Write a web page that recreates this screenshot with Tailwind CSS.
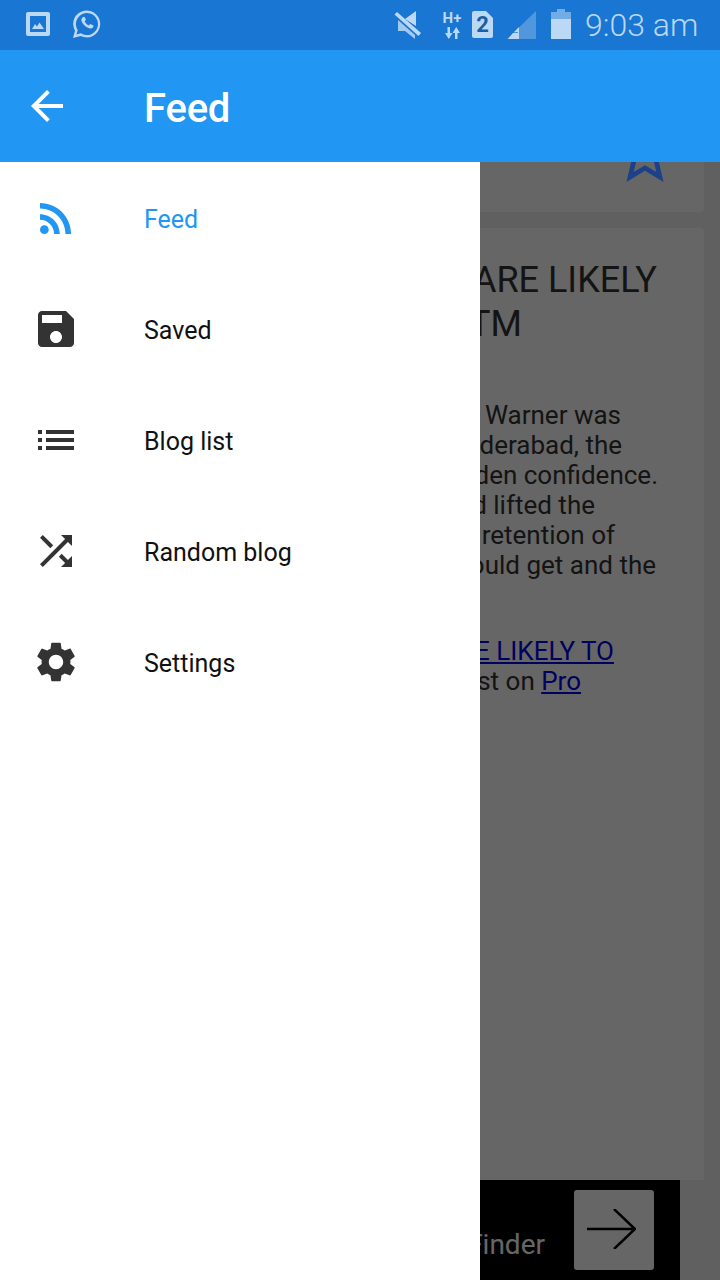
<!DOCTYPE html>
<html lang="en">
  <head>
    <meta charset="UTF-8" />
    <meta name="viewport" content="width=device-width, initial-scale=1.0" />
    <title>Feed</title>
    <script src="https://cdn.jsdelivr.net/npm/@tailwindcss/browser@4"></script>
  </head>
  <body class="font-['Roboto',sans-serif]">
    <div class="w-[720px] h-[1280px] overflow-hidden flex flex-col bg-white">
      <!-- status bar -->
      <div class="relative z-20 h-[50px] shrink-0 bg-[#1976d2] flex items-center text-[#bbd8f5]">
        <svg class="ml-[26px] -mt-[2px] w-[24px] h-[24px]" viewBox="0 0 24 24" fill="currentColor">
          <path fill-rule="evenodd" d="M2 0h20a2 2 0 0 1 2 2v20a2 2 0 0 1-2 2H2a2 2 0 0 1-2-2V2a2 2 0 0 1 2-2zm2 4v16h16V4H4zm2 13l3-5 2 2.500 2.500-4 4.500 6.500H6z" />
        </svg>
        <svg class="ml-[22px] -mt-[3px] w-[29px] h-[30px]" viewBox="0 0 29 30" fill="currentColor">
          <path fill-rule="evenodd" d="M1 29l2-7.300A13.500 13.500 0 1 1 8.600 27L1 29zm3.500-3.500l4.500-1.200A11 11 0 1 0 5.700 21l-1.200 4.500z" />
          <path d="M10.800 8.200c.8-.8 1.600-.7 2 .1l.9 2c.2.5.1.9-.3 1.300l-.7.800c.9 1.800 2.200 3.100 4 4l.9-.9c.4-.4.800-.4 1.300-.2l2 1c.7.400.8 1 .3 1.800-1 1.500-2.700 1.900-4.800 1-3.300-1.400-5.500-3.700-6.700-6.500-.7-1.800-.2-3.300 1.100-4.400z" />
        </svg>

        <svg class="ml-[293px] w-[27px] h-[28px]" viewBox="0 0 27 28" fill="currentColor">
          <path d="M22 0v15L11 8l11-8z" />
          <path d="M0.500 3.500L3 1l24 21-2.500 3z" />
          <path opacity="0.85" d="M4 9l17 15v4l-10-8H4V9z" />
        </svg>
        <div class="ml-[21px] w-[20px] h-[27px] flex flex-col items-center justify-between">
          <span class="text-[15px] leading-[12px] font-bold">H+</span>
          <svg class="w-[15px] h-[12px]" viewBox="0 0 15 12" fill="currentColor">
            <path d="M2.500 0h2.500v6h2.500l-3.750 6L0 6h2.500V0zM10 12h2.500V6H15L11.250 0 7.500 6H10v6z" />
          </svg>
        </div>
        <div class="ml-[10px] -mt-[2px] w-[21px] h-[27px] relative">
          <svg class="w-[21px] h-[27px]" viewBox="0 0 21 27" fill="currentColor">
            <path d="M2 0h12l7 7v18a2 2 0 0 1-2 2H2a2 2 0 0 1-2-2V2a2 2 0 0 1 2-2z" />
          </svg>
          <span class="absolute inset-0 flex items-center justify-center text-[22px] font-bold text-[#1a5ea8]">2</span>
        </div>
        <svg class="ml-[14px] w-[29px] h-[28px]" viewBox="0 0 29 28" fill="currentColor">
          <path opacity="0.35" d="M29 0v28H0L29 0z" />
          <path d="M6 22h5v6H1zM7 21l5-5v12h-1v-7z" />
        </svg>
        <svg class="ml-[15px] -mt-[3px] w-[20px] h-[30px]" viewBox="0 0 20 30" fill="currentColor">
          <path opacity="0.55" d="M6 0h8v3h6v7H0V3h6V0z" />
          <path d="M0 10h20v20H0z" />
        </svg>
        <span class="ml-[14px] text-[32px] leading-none font-light whitespace-nowrap">9:03 am</span>
      </div>

      <!-- toolbar -->
      <div class="relative z-20 h-[112px] shrink-0 bg-[#2196f3] flex items-center text-white">
        <svg class="ml-[23px] w-[48px] h-[48px]" viewBox="0 0 24 24" fill="currentColor">
          <path d="M20 11H7.830l5.590-5.590L12 4l-8 8 8 8 1.410-1.410L7.830 13H20v-2z" />
        </svg>
        <h1 class="ml-[73px] mt-[6px] text-[40px] leading-none font-medium tracking-[-0.2px]">Feed</h1>
      </div>

      <div class="relative flex-1 min-h-0">
        <!-- article list behind the drawer -->
        <div class="h-full bg-[#f0f0f0] flex flex-col">
          <div class="mx-[16px] h-[50px] shrink-0 bg-white rounded-b-sm flex justify-end">
            <svg class="relative z-10 -mt-[43px] mr-[23px] w-[72px] h-[72px] shrink-0 text-[#1d4189]" viewBox="0 0 24 24" fill="currentColor">
              <path d="M22 9.240l-7.190-.620L12 2 9.190 8.630 2 9.240l5.460 4.730L5.820 21 12 17.270 18.180 21l-1.630-7.030L22 9.240zM12 15.400l-3.760 2.270 1-4.280-3.320-2.880 4.380-.380L12 6.100l1.710 4.020 4.380.380-3.320 2.880 1 4.280L12 15.400z" />
            </svg>
          </div>
          <div class="mx-[16px] mt-[16px] h-[952px] shrink-0 bg-white rounded-t-sm pt-[30px] text-right whitespace-nowrap text-[#333333]">
            <p class="text-[36px] leading-[44px]">
              <span class="block pr-[47px]">ARE LIKELY</span>
              <span class="block pr-[182px]">TM</span>
            </p>
            <p class="mt-[54px] text-[26px] leading-[30px]">
              <span class="block pr-[83px]">Warner was</span>
              <span class="block pr-[82px]">Hyderabad, the</span>
              <span class="block pr-[46px]">sudden confidence.</span>
              <span class="block pr-[109px]">and lifted the</span>
              <span class="block pr-[89px]">retention of</span>
              <span class="block pr-[48px]">could get and the</span>
            </p>
            <p class="mt-[56px] text-[26px] leading-[30px]">
              <a class="block pr-[90px] text-[#0000ee] underline" href="#">ARE LIKELY TO</a>
              <span class="block pr-[123px]">first on <a class="text-[#0000ee] underline" href="#">Pro</a></span>
            </p>
          </div>
          <div class="ml-[40px] w-[640px] flex-1 bg-black flex items-center justify-end pr-[26px]">
            <span class="mt-[30px] text-[28px] leading-none text-white">Finder</span>
            <div class="ml-[29px] w-[80px] h-[80px] bg-white rounded-[3px] flex items-center justify-center pr-[5px] pb-[2px]">
              <svg class="w-[49px] h-[40px]" viewBox="0 0 49 40" fill="none" stroke="#000" stroke-width="2.500">
                <path d="M0 20h48M27 0l21 20-21 20" />
              </svg>
            </div>
          </div>
        </div>

        <!-- scrim and navigation drawer -->
        <div class="absolute inset-0 bg-black/60"></div>
        <nav class="absolute inset-y-0 left-0 w-[480px] bg-white pt-[2px] text-[25px] text-[#111111]">
          <a class="h-[111px] flex items-center text-[#2196f3]" href="#">
            <svg class="ml-[32px] -mt-[4px] w-[48px] h-[48px]" viewBox="0 0 24 24" fill="currentColor">
              <circle cx="6.180" cy="17.820" r="2.180" />
              <path d="M4 4.440v2.830c7.030 0 12.730 5.700 12.730 12.730h2.830c0-8.590-6.970-15.560-15.560-15.560zm0 5.660v2.830c3.900 0 7.070 3.170 7.070 7.070h2.830c0-5.470-4.430-9.900-9.900-9.900z" />
            </svg>
            <span class="ml-[64px]">Feed</span>
          </a>
          <a class="h-[111px] flex items-center" href="#">
            <svg class="ml-[32px] -mt-[4px] w-[48px] h-[48px] text-[#333333]" viewBox="0 0 24 24" fill="currentColor">
              <path d="M17 3H5c-1.110 0-2 .9-2 2v14c0 1.100.89 2 2 2h14c1.100 0 2-.9 2-2V7l-4-4zm-5 16c-1.660 0-3-1.340-3-3s1.340-3 3-3 3 1.340 3 3-1.340 3-3 3zm3-10H5V5h10v4z" />
            </svg>
            <span class="ml-[64px]">Saved</span>
          </a>
          <a class="h-[111px] flex items-center" href="#">
            <svg class="ml-[32px] -mt-[4px] w-[48px] h-[48px] text-[#333333]" viewBox="0 0 24 24" fill="currentColor">
              <path d="M3 13h2v-2H3v2zm0 4h2v-2H3v2zm0-8h2V7H3v2zm4 4h14v-2H7v2zm0 4h14v-2H7v2zM7 7v2h14V7H7z" />
            </svg>
            <span class="ml-[64px]">Blog list</span>
          </a>
          <a class="h-[111px] flex items-center" href="#">
            <svg class="ml-[32px] -mt-[4px] w-[48px] h-[48px] text-[#333333]" viewBox="0 0 24 24" fill="currentColor">
              <path d="M10.590 9.170L5.410 4 4 5.410l5.170 5.170 1.420-1.410zM14.500 4l2.040 2.040L4 18.590 5.410 20 17.960 7.460 20 9.500V4h-5.500zm.33 9.410l-1.410 1.410 3.130 3.130L14.500 20H20v-5.500l-2.040 2.040-3.130-3.130z" />
            </svg>
            <span class="ml-[64px]">Random blog</span>
          </a>
          <a class="h-[111px] flex items-center" href="#">
            <svg class="ml-[32px] -mt-[4px] w-[48px] h-[48px] text-[#333333]" viewBox="0 0 24 24" fill="currentColor">
              <path fill-rule="evenodd" d="M19.140 12.940c.04-.3.06-.61.06-.94 0-.32-.02-.64-.07-.94l2.030-1.580c.18-.14.23-.41.12-.61l-1.920-3.320c-.12-.22-.37-.29-.59-.22l-2.390.96c-.5-.38-1.030-.7-1.620-.94l-.36-2.540c-.04-.24-.24-.41-.48-.41h-3.840c-.24 0-.43.17-.47.41l-.36 2.540c-.59.24-1.130.57-1.620.94l-2.390-.96c-.22-.08-.47 0-.59.22L2.740 8.870c-.12.21-.08.47.12.61l2.030 1.580c-.05.3-.09.63-.09.94s.02.64.07.94l-2.030 1.580c-.18.14-.23.41-.12.61l1.920 3.320c.12.22.37.29.59.22l2.390-.96c.5.38 1.030.7 1.620.94l.36 2.54c.05.24.24.41.48.41h3.840c.24 0 .44-.17.47-.41l.36-2.540c.59-.24 1.130-.56 1.620-.94l2.390.96c.22.08.47 0 .59-.22l1.920-3.320c.12-.22.07-.47-.12-.61l-2.010-1.580zM12 15.600c-1.980 0-3.600-1.620-3.600-3.600s1.620-3.600 3.600-3.600 3.600 1.620 3.600 3.600-1.620 3.600-3.600 3.600z" />
            </svg>
            <span class="ml-[64px]">Settings</span>
          </a>
        </nav>
      </div>
    </div>
  </body>
</html>
